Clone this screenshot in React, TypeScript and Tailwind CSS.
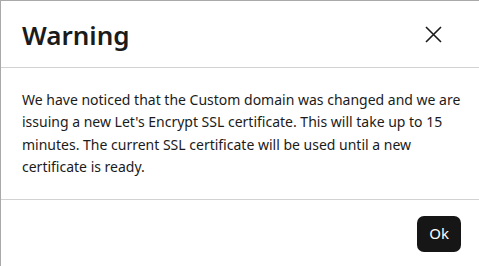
const App = () => {
    return (
        <div className="w-[479px] h-[266px] overflow-hidden bg-white border-l border-t border-[#a9a9a9] text-[#1b1b1b] font-['Noto_Sans',sans-serif]">
            <div className="h-[67px] flex items-center justify-between pl-[21px] pr-[37px] border-b border-[#d2d2d2]">
                <h1 className="text-[26px] font-semibold leading-none mt-[2px]">Warning</h1>
                <svg width="17" height="17" viewBox="0 0 17 17" className="text-[#1b1b1b]">
                    <path d="M1 1L16 16M16 1L1 16" stroke="currentColor" strokeWidth="1.6" fill="none" />
                </svg>
            </div>
            <div className="pl-[21px] pr-[18px] pt-[21px] pb-[20px] border-b border-[#d2d2d2]">
                <p className="text-[14px] leading-[22.4px]">
                    We have noticed that the Custom domain was changed and we are issuing a new Let's Encrypt SSL certificate. This will take up to 15 minutes. The current SSL certificate will be used until a new certificate is ready.
                </p>
            </div>
            <div className="flex justify-end pt-[16px] pr-[18px]">
                <button className="h-[36px] px-[12px] rounded-[7px] bg-[#161616] text-white text-[15px]">Ok</button>
            </div>
        </div>
    );
}

export default App;
